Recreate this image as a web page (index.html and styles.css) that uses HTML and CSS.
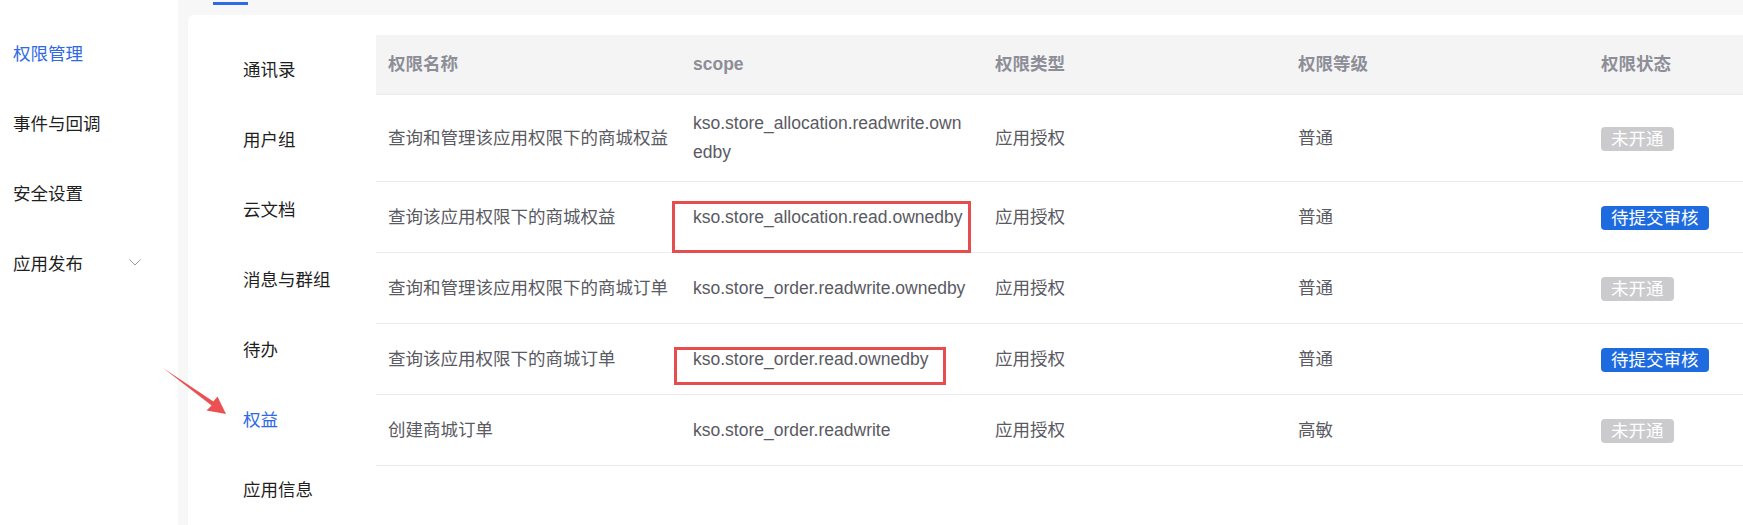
FILE: index.html
```html
<!DOCTYPE html>
<html lang="zh-CN">
<head>
<meta charset="utf-8">
<title>权限管理</title>
<link rel="stylesheet" href="styles.css">
</head>
<body>
<div class="app">
  <aside class="sidebar">
    <div class="side-item active">权限管理</div>
    <div class="side-item">事件与回调</div>
    <div class="side-item">安全设置</div>
    <div class="side-item">应用发布
      <svg class="chevron" width="12" height="7" viewBox="0 0 12 7"><path d="M0.5 0.5 L6 6 L11.5 0.5" fill="none" stroke="#9a9aa3" stroke-width="1"/></svg>
    </div>
  </aside>
  <main class="main">
    <div class="tabs"><span class="tab-ink"></span></div>
    <section class="card">
      <nav class="subnav">
        <div class="sub-item">通讯录</div>
        <div class="sub-item">用户组</div>
        <div class="sub-item">云文档</div>
        <div class="sub-item">消息与群组</div>
        <div class="sub-item">待办</div>
        <div class="sub-item active">权益</div>
        <div class="sub-item">应用信息</div>
      </nav>
      <div class="table">
        <div class="row head">
          <div class="cell">权限名称</div>
          <div class="cell">scope</div>
          <div class="cell">权限类型</div>
          <div class="cell">权限等级</div>
          <div class="cell">权限状态</div>
        </div>
        <div class="row">
          <div class="cell">查询和管理该应用权限下的商城权益</div>
          <div class="cell scope">kso.store_allocation.readwrite.ownedby</div>
          <div class="cell">应用授权</div>
          <div class="cell">普通</div>
          <div class="cell"><span class="tag off">未开通</span></div>
        </div>
        <div class="row">
          <div class="cell">查询该应用权限下的商城权益</div>
          <div class="cell scope">kso.store_allocation.read.ownedby<span class="mark mark-a"></span></div>
          <div class="cell">应用授权</div>
          <div class="cell">普通</div>
          <div class="cell"><span class="tag pending">待提交审核</span></div>
        </div>
        <div class="row">
          <div class="cell">查询和管理该应用权限下的商城订单</div>
          <div class="cell scope">kso.store_order.readwrite.ownedby</div>
          <div class="cell">应用授权</div>
          <div class="cell">普通</div>
          <div class="cell"><span class="tag off">未开通</span></div>
        </div>
        <div class="row">
          <div class="cell">查询该应用权限下的商城订单</div>
          <div class="cell scope">kso.store_order.read.ownedby<span class="mark mark-b"></span></div>
          <div class="cell">应用授权</div>
          <div class="cell">普通</div>
          <div class="cell"><span class="tag pending">待提交审核</span></div>
        </div>
        <div class="row">
          <div class="cell">创建商城订单</div>
          <div class="cell scope">kso.store_order.readwrite</div>
          <div class="cell">应用授权</div>
          <div class="cell">高敏</div>
          <div class="cell"><span class="tag off">未开通</span></div>
        </div>
      </div>
    </section>
  </main>
  <svg class="arrow" width="70" height="54" viewBox="0 0 70 54">
    <polygon points="3,4 53.4,37.6 57.5,32.5 66,50 46.5,46.5 51.6,41.4" fill="#eb5152"/>
  </svg>
</div>
</body>
</html>
```

FILE: styles.css
```css
* { box-sizing: border-box; margin: 0; padding: 0; }

html, body {
  width: 1743px;
  height: 525px;
  overflow: hidden;
  background: #ffffff;
}

body {
  font-family: "Liberation Sans", "Noto Sans CJK SC", sans-serif;
  font-size: 17.5px;
  color: #1f1f1f;
}

.app {
  position: relative;
  display: flex;
  height: 525px;
}

.sidebar {
  width: 178px;
  flex-shrink: 0;
  background: #ffffff;
  padding-top: 17px;
}

.side-item {
  display: flex;
  align-items: center;
  height: 70px;
  padding-left: 13px;
  padding-right: 37px;
  color: #1f1f1f;
}

.side-item.active { color: #2f6ae6; }

.chevron { margin-left: auto; }

.main {
  flex: 1;
  min-width: 0;
  display: flex;
  flex-direction: column;
  background: #f7f7f8;
  padding-left: 10px;
}

.tabs {
  height: 15px;
  padding-left: 25px;
  padding-top: 2px;
}

.tab-ink {
  display: block;
  width: 35px;
  height: 3px;
  background: #2f6ae6;
}

.card {
  flex: 1;
  display: flex;
  background: #ffffff;
  border-top-left-radius: 6px;
  padding-top: 20px;
  overflow: hidden;
}

.subnav {
  width: 188px;
  flex-shrink: 0;
  padding-left: 55px;
}

.sub-item {
  height: 70px;
  line-height: 70px;
  color: #1f1f1f;
}

.sub-item.active { color: #2f6ae6; }

.table {
  width: 1516px;
  flex-shrink: 0;
}

.row {
  display: grid;
  grid-template-columns: 305px 302px 303px 303px 303px;
  align-items: center;
  min-height: 71px;
  border-bottom: 1px solid #eaecf2;
  color: #5a5a63;
}

.row.head {
  min-height: 60px;
  background: #f4f4f5;
  color: #8d8e97;
  font-weight: bold;
}

.cell {
  padding: 14px 8px 14px 12px;
  line-height: 29px;
}

.scope {
  position: relative;
  padding-right: 14px;
  word-break: break-all;
}

.tag {
  display: inline-block;
  height: 24px;
  line-height: 24px;
  padding: 0 10px;
  border-radius: 4px;
  color: #ffffff;
  vertical-align: middle;
}

.tag.off { background: #cbcbcd; }
.tag.pending { background: #1e6be0; }

.mark {
  position: absolute;
  border: 3px solid #e54d4f;
}

.mark-a {
  left: -9px;
  top: 12px;
  width: 299px;
  height: 52px;
}

.mark-b {
  left: -7px;
  top: 16px;
  width: 272px;
  height: 38px;
}

.arrow {
  position: absolute;
  left: 160px;
  top: 364px;
}
```
